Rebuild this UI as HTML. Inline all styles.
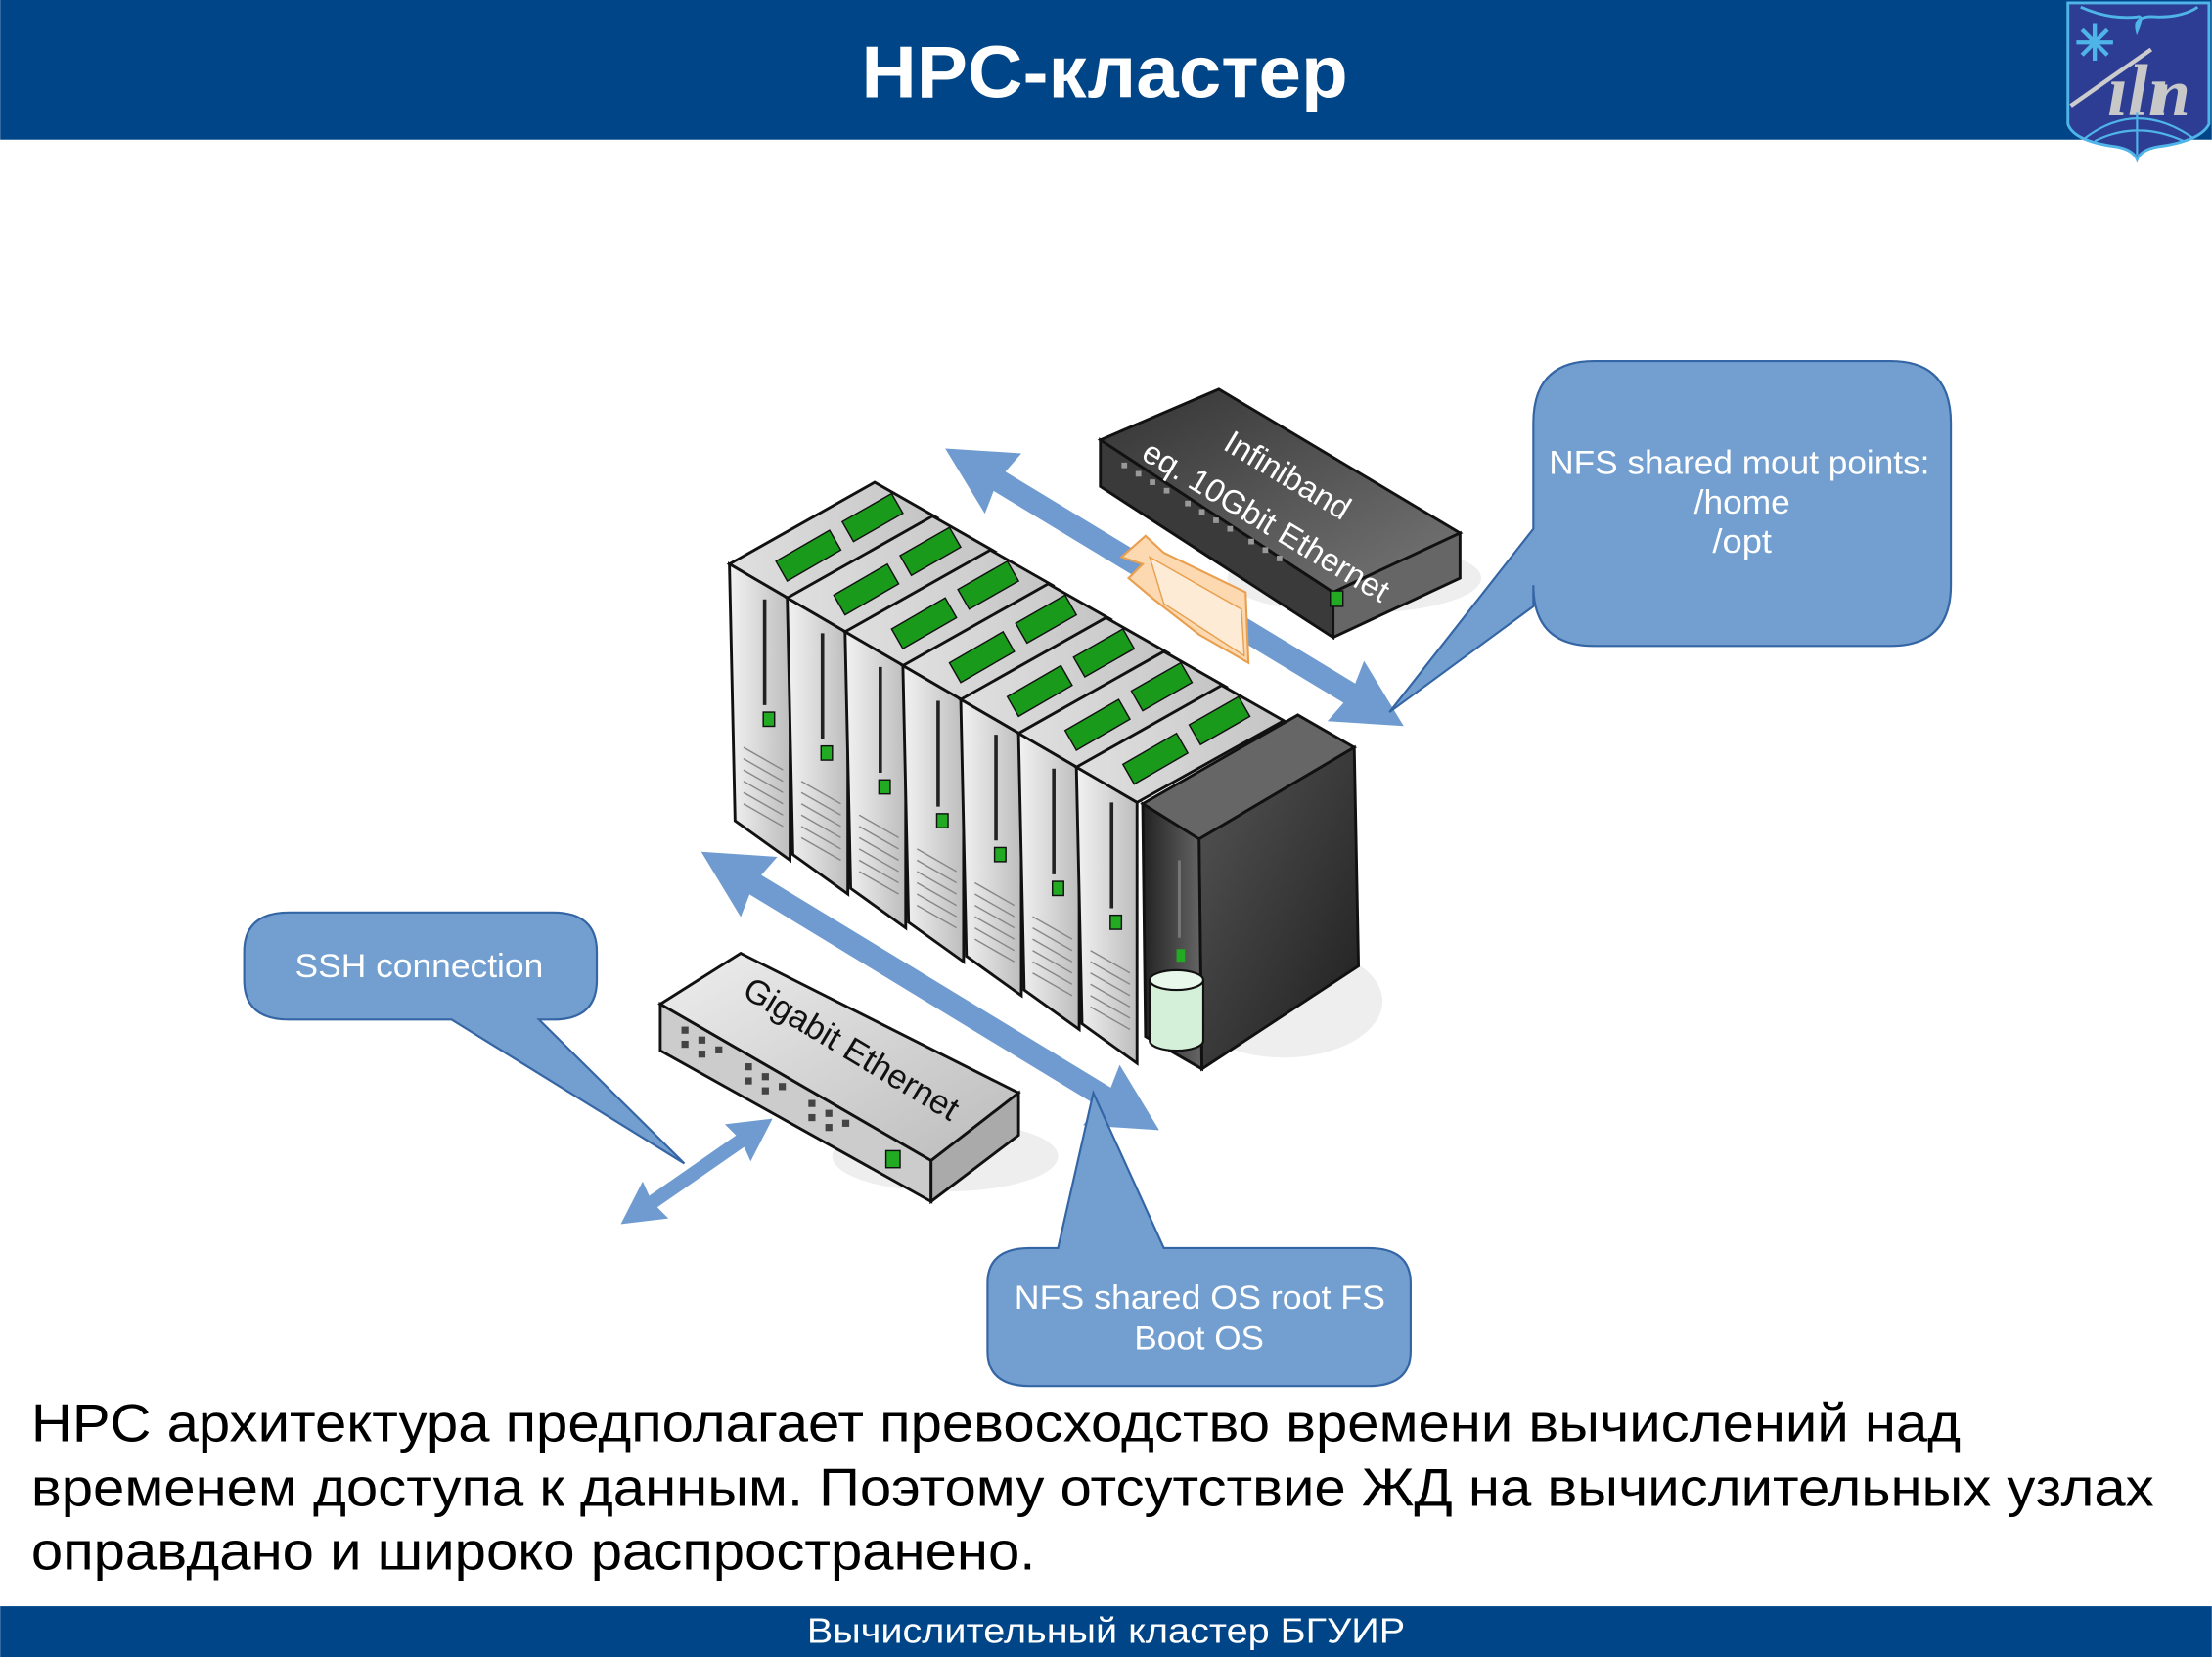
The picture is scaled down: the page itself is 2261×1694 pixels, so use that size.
<!DOCTYPE html>
<html><head><meta charset="utf-8"><style>html,body{margin:0;padding:0;background:#fff}svg{display:block}</style></head>
<body>
<svg width="2261" height="1694" viewBox="0 0 1568 1175" xmlns="http://www.w3.org/2000/svg" font-family="Liberation Sans, DejaVu Sans, sans-serif">
<defs>
<linearGradient id="front" x1="0" x2="1"><stop offset="0" stop-color="#f2f2f2"/><stop offset="0.5" stop-color="#d8d8d8"/><stop offset="1" stop-color="#bdbdbd"/></linearGradient>
<linearGradient id="top" x1="0" x2="1"><stop offset="0" stop-color="#e0e0e0"/><stop offset="1" stop-color="#c4c4c4"/></linearGradient>
<linearGradient id="dark" x1="0" x2="1" y1="0" y2="1"><stop offset="0" stop-color="#555"/><stop offset="1" stop-color="#1e1e1e"/></linearGradient>
<linearGradient id="darkf" x1="0" x2="1"><stop offset="0" stop-color="#222"/><stop offset="1" stop-color="#666"/></linearGradient>
<linearGradient id="sw" x1="0" x2="1" y1="0" y2="1"><stop offset="0" stop-color="#eee"/><stop offset="1" stop-color="#bbb"/></linearGradient>
<linearGradient id="swd" x1="0" x2="1" y1="0" y2="1"><stop offset="0" stop-color="#333"/><stop offset="1" stop-color="#777"/></linearGradient>
</defs>
<rect width="1568" height="1175" fill="#fff"/>
<rect x="0" y="0" width="1568" height="99" fill="#004587"/>
<text x="783" y="69" text-anchor="middle" font-size="52" font-weight="bold" fill="#fff" textLength="345" lengthAdjust="spacingAndGlyphs">HPC-кластер</text>
<path d="M1466 2 L1566 2 L1566 88 Q1560 100 1530 104 Q1518 106 1515 113 Q1512 106 1500 104 Q1470 100 1466 88 Z" fill="#2c3d93" stroke="#4fb5e8" stroke-width="2"/>
<path d="M1475 5 Q1495 14 1515 12 Q1520 10 1515 22 Q1512 10 1530 12 Q1548 12 1558 5" fill="none" stroke="#4fb5e8" stroke-width="2"/>
<g stroke="#4fb5e8" stroke-width="3"><line x1="1472" y1="30" x2="1498" y2="30"/><line x1="1485" y1="17" x2="1485" y2="43"/><line x1="1476" y1="21" x2="1494" y2="39"/><line x1="1494" y1="21" x2="1476" y2="39"/></g>
<path d="M1468 75 L1525 35" stroke="#ccc" stroke-width="3"/>
<text x="1494" y="82" font-size="52" font-style="italic" font-weight="bold" fill="#c8c8c8" font-family="Liberation Serif, serif">ılı</text>
<text x="1526" y="82" font-size="48" font-style="italic" font-weight="bold" fill="#c8c8c8" font-family="Liberation Serif, serif">n</text>
<path d="M1478 98 Q1515 70 1555 98 M1485 100 Q1515 85 1548 100 M1515 80 L1515 110" fill="none" stroke="#4fb5e8" stroke-width="1.5"/>
<g fill="#6f9bd0">
<polygon transform="translate(670,318) rotate(31.2)" points="0,0 48,-25 45,-8 335,-8 332,-25 380,0 332,25 335,8 45,8 48,25"/>
<polygon transform="translate(497,604) rotate(31.3)" points="0,0 48,-25 45,-8 335,-8 332,-25 380,0 332,25 335,8 45,8 48,25"/>
<polygon transform="translate(440,868) rotate(-34.8)" points="0,0 30,-16 28,-5 103,-5 101,-16 131,0 101,16 103,5 28,5 30,16"/>
</g>
<ellipse cx="960" cy="410" rx="90" ry="25" fill="#eee"/>
<polygon points="780,312 864,276 1035,378 945,420" fill="url(#swd)" stroke="#111" stroke-width="2"/>
<polygon points="780,312 945,420 945,452 780,345" fill="#3a3a3a" stroke="#111" stroke-width="2"/>
<polygon points="945,420 1035,378 1035,410 945,452" fill="#666" stroke="#111" stroke-width="2"/>
<g fill="#999"><rect x="795" y="328" width="4" height="4"/><rect x="805" y="334" width="4" height="4"/><rect x="815" y="340" width="4" height="4"/><rect x="825" y="346" width="4" height="4"/><rect x="840" y="355" width="4" height="4"/><rect x="850" y="361" width="4" height="4"/><rect x="860" y="367" width="4" height="4"/><rect x="870" y="373" width="4" height="4"/><rect x="885" y="382" width="4" height="4"/><rect x="895" y="388" width="4" height="4"/><rect x="905" y="394" width="4" height="4"/></g>
<rect x="943" y="419" width="9" height="11" fill="#2a2" stroke="#111"/>
<text transform="translate(808,325) rotate(31)" font-size="23" fill="#fff">eq. 10Gbit Ethernet</text>
<text transform="translate(866,318) rotate(31)" font-size="23" fill="#fff">Infiniband</text>
<polygon points="812,380 825,392 883,420 885,470 850,450 818,425 800,410 810,400 795,395" fill="#fcd9b0" stroke="#e8a050" stroke-width="1.5"/>
<polygon points="815,395 880,432 882,465 825,428" fill="#fdebd6" stroke="#e8a050" stroke-width="1"/>
<g id="towers">
<g id="t0">
<polygon points="517,400 620,342 664,367 560,425" fill="url(#top)" stroke="#111" stroke-width="2"/>
<polygon points="550,398 588,376 596,390 558,412" fill="#1a9a1a" stroke="#111"/>
<polygon points="597,370 632,350 640,364 605,384" fill="#1a9a1a" stroke="#111"/>
<polygon points="517,400 560,425 560,610 521,582" fill="url(#front)" stroke="#111" stroke-width="2"/>
<line x1="542" y1="425" x2="542" y2="500" stroke="#222" stroke-width="2.5"/>
<rect x="541" y="505" width="8" height="10" fill="#2a2" stroke="#111"/>
<g stroke="#888"><line x1="527" y1="530" x2="555" y2="546"/><line x1="527" y1="538" x2="555" y2="554"/><line x1="527" y1="546" x2="555" y2="562"/><line x1="527" y1="554" x2="555" y2="570"/><line x1="527" y1="562" x2="555" y2="578"/><line x1="527" y1="570" x2="555" y2="586"/></g>
</g>
<use href="#t0" transform="translate(41,24)"/>
<use href="#t0" transform="translate(82,48)"/>
<use href="#t0" transform="translate(123,72)"/>
<use href="#t0" transform="translate(164,96)"/>
<use href="#t0" transform="translate(205,120)"/>
<use href="#t0" transform="translate(246,144)"/>
</g>
<ellipse cx="910" cy="710" rx="70" ry="40" fill="#eee"/>
<polygon points="810,570 920,507 960,530 850,595" fill="#666" stroke="#111" stroke-width="2"/>
<polygon points="850,595 960,530 963,685 852,758" fill="url(#dark)" stroke="#111" stroke-width="2"/>
<polygon points="810,570 850,595 852,758 812,735" fill="url(#darkf)" stroke="#111" stroke-width="2"/>
<line x1="836" y1="610" x2="836" y2="665" stroke="#777" stroke-width="2"/>
<rect x="834" y="673" width="6" height="9" fill="#2a2"/>
<path d="M815 695 L815 738 A19 7 0 0 0 853 738 L853 695" fill="#d4f0d8" stroke="#111" stroke-width="1.5"/>
<ellipse cx="834" cy="695" rx="19" ry="7" fill="#e8f8ea" stroke="#111" stroke-width="1.5"/>
<ellipse cx="670" cy="820" rx="80" ry="25" fill="#eee"/>
<polygon points="468,712 525,676 722,775 660,823" fill="url(#sw)" stroke="#111" stroke-width="2"/>
<polygon points="468,712 660,823 660,852 468,745" fill="#ccc" stroke="#111" stroke-width="2"/>
<polygon points="660,823 722,775 722,805 660,852" fill="#aaa" stroke="#111" stroke-width="2"/>
<g fill="#444"><rect x="483" y="728" width="5" height="5"/><rect x="495" y="735" width="5" height="5"/><rect x="507" y="742" width="5" height="5"/><rect x="528" y="754" width="5" height="5"/><rect x="540" y="761" width="5" height="5"/><rect x="552" y="768" width="5" height="5"/><rect x="573" y="780" width="5" height="5"/><rect x="585" y="787" width="5" height="5"/><rect x="597" y="794" width="5" height="5"/><rect x="483" y="738" width="5" height="5"/><rect x="495" y="745" width="5" height="5"/><rect x="528" y="764" width="5" height="5"/><rect x="540" y="771" width="5" height="5"/><rect x="573" y="790" width="5" height="5"/><rect x="585" y="797" width="5" height="5"/></g>
<rect x="628" y="816" width="10" height="12" fill="#2a2" stroke="#111"/>
<text transform="translate(525,706) rotate(31)" font-size="24" fill="#111">Gigabit Ethernet</text>
<g fill="#729fcf" stroke="#3465a4" stroke-width="1.5">
<path d="M1130 256 L1340 256 Q1383 256 1383 300 L1383 415 Q1383 458 1340 458 L1130 458 Q1087 458 1087 415 L1087 430 L985 505 L1087 375 L1087 300 Q1087 256 1130 256 Z"/>
<path d="M205 647 L392 647 Q423 647 423 675 L423 695 Q423 723 392 723 L382 723 L485 825 L320 723 L205 723 Q173 723 173 695 L173 675 Q173 647 205 647 Z"/>
<path d="M730 885 L750 885 L775 775 L825 885 L970 885 Q1000 885 1000 910 L1000 958 Q1000 983 970 983 L730 983 Q700 983 700 958 L700 910 Q700 885 730 885 Z"/>
</g>
<g fill="#fff" font-size="24">
<text x="1098" y="336" textLength="270" lengthAdjust="spacingAndGlyphs">NFS shared mout points:</text>
<text x="1201" y="364" textLength="68" lengthAdjust="spacingAndGlyphs">/home</text>
<text x="1214" y="392" textLength="42" lengthAdjust="spacingAndGlyphs">/opt</text>
<text x="209" y="693" textLength="176" lengthAdjust="spacingAndGlyphs">SSH connection</text>
<text x="719" y="928" textLength="263" lengthAdjust="spacingAndGlyphs">NFS shared OS root FS</text>
<text x="804" y="957" textLength="92" lengthAdjust="spacingAndGlyphs">Boot OS</text>
</g>
<g font-size="38" fill="#000">
<text x="22" y="1022" textLength="1368" lengthAdjust="spacingAndGlyphs">HPC архитектура предполагает превосходство времени вычислений над</text>
<text x="22" y="1068" textLength="1505" lengthAdjust="spacingAndGlyphs">временем доступа к данным. Поэтому отсутствие ЖД на вычислительных узлах</text>
<text x="22" y="1113" textLength="712" lengthAdjust="spacingAndGlyphs">оправдано и широко распространено.</text>
</g>
<rect x="0" y="1139" width="1568" height="36" fill="#004587"/>
<text x="784" y="1165" text-anchor="middle" font-size="25" fill="#fff" textLength="424" lengthAdjust="spacingAndGlyphs">Вычислительный кластер БГУИР</text>
</svg>
</body></html>
